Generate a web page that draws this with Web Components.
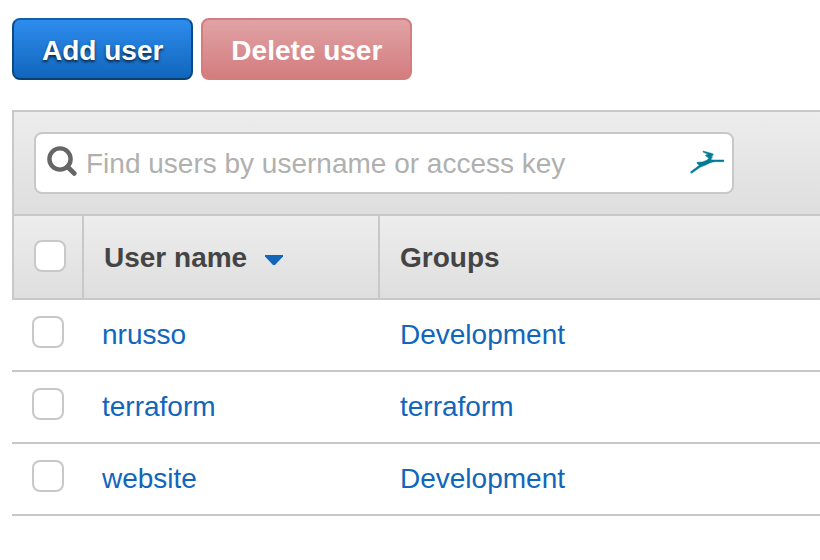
<!DOCTYPE html>
<html lang="en">
<head>
<meta charset="utf-8">
<meta name="viewport" content="width=device-width, initial-scale=1">
<title>Users</title>
<style>
  body {
    margin: 0;
    background: #fff;
    color: #444;
    font: 28px/32px "Liberation Sans", Arial, sans-serif;
    --line: #c8c8c8;
    --link: #1166bb;
    --bar: linear-gradient(#ededed, #dedede);
  }
</style>
</head>
<body>
<user-page>
  <action-button slot="actions">Add user</action-button>
  <action-button slot="actions" variant="danger" disabled>Delete user</action-button>
  <search-field slot="search" placeholder="Find users by username or access key"></search-field>
  <user-table></user-table>
</user-page>

<script>
class BaseElement extends HTMLElement {
  connectedCallback() {
    if (this.shadowRoot) return;
    this.attachShadow({ mode: "open" }).innerHTML = this.render();
  }
}

class UserPage extends BaseElement {
  render() {
    return `
      <style>
        :host { display: block; padding: 18px 0 18px 12px; }
        .actions { display: flex; gap: 8px; margin-bottom: 30px; }
        .filter {
          padding: 20px;
          background: var(--bar);
          border: 2px solid var(--line);
          border-right: 0;
        }
      </style>
      <div class="actions"><slot name="actions"></slot></div>
      <main>
        <div class="filter"><slot name="search"></slot></div>
        <slot></slot>
      </main>`;
  }
}

class ActionButton extends BaseElement {
  render() {
    return `
      <style>
        :host { display: block; }
        button {
          display: block;
          padding: 15px 28px 11px;
          font: bold 28px/32px "Liberation Sans", Arial, sans-serif;
          color: #fff;
          border: 2px solid;
          border-color: #1160b0 #0c4a85 #0a3f74;
          border-radius: 8px;
          background: linear-gradient(#2e8cee, #1166bb);
          text-shadow: 0 2px 3px rgba(0, 0, 0, .7);
          cursor: pointer;
        }
        :host([variant="danger"]) button {
          border-color: #d47c7e;
          background: linear-gradient(#e0a3a5, #d47c7e);
          text-shadow: none;
          cursor: default;
        }
      </style>
      <button type="button" ${this.hasAttribute("disabled") ? "disabled" : ""}><slot></slot></button>`;
  }
}

class SearchField extends BaseElement {
  render() {
    const text = this.getAttribute("placeholder");
    return `
      <style>
        :host {
          display: flex;
          align-items: center;
          box-sizing: border-box;
          max-width: 700px;
          padding: 12px 8px 12px 11px;
          gap: 9px;
          background: #fff;
          border: 2px solid var(--line);
          border-radius: 8px;
        }
        svg { flex: none; display: block; }
        input {
          flex: 1;
          min-width: 0;
          height: 32px;
          padding: 2px 0 0;
          border: 0;
          outline: 0;
          background: none;
          font: inherit;
          color: #444;
        }
        input::placeholder { color: #b0b0b0; opacity: 1; }
      </style>
      <svg width="30" height="34" viewBox="0 0 30 34" fill="none" stroke="#666" aria-hidden="true">
        <circle cx="13" cy="13" r="10.6" stroke-width="4.4"/>
        <path d="M20.5 20.7 27.2 27.4" stroke-width="4.8" stroke-linecap="round"/>
      </svg>
      <input type="text" placeholder="${text}" aria-label="${text}">
      <svg width="34" height="26" viewBox="120 150 102 78" fill="#007b94" stroke="#007b94" stroke-width="1.5" aria-hidden="true">
        <path d="M159 153 188 161 190 165 184 168 188 171 184 174 183 179 190 180H222V185H194C182 186 176 190 167 195L150 202 125 220 121 216 148 196 141 190V187L157 186 170 181 176 176 173 171 167 168V165L175 163 160 157Z"/>
      </svg>`;
  }
}

class TickBox extends BaseElement {
  render() {
    return `
      <style>
        :host { display: block; }
        input {
          appearance: none;
          display: block;
          width: 32px;
          height: 32px;
          margin: 0;
          background: #fff;
          border: 2px solid var(--line);
          border-radius: 8px;
        }
        input:checked { background: var(--link); }
      </style>
      <input type="checkbox" aria-label="${this.getAttribute("label")}">`;
  }
}

class UserTable extends BaseElement {
  render() {
    const users = [
      ["nrusso", "Development"],
      ["terraform", "terraform"],
      ["website", "Development"],
    ];
    const rows = users.map(([name, group]) => `
      <tr>
        <td><tick-box label="Select ${name}"></tick-box></td>
        <td><a href="#${name}">${name}</a></td>
        <td><a href="#group-${group}">${group}</a></td>
      </tr>`).join("");
    return `
      <style>
        :host { display: block; }
        table { width: 100%; border-spacing: 0; table-layout: fixed; }
        .pick { width: 72px; }
        .name { width: 296px; }
        th, td {
          box-sizing: border-box;
          text-align: left;
          border-bottom: 2px solid var(--line);
        }
        thead tr { background: var(--bar); }
        th { height: 84px; padding: 2px 20px 0; border-right: 2px solid var(--line); }
        th:first-child { border-left: 2px solid var(--line); padding: 0 0 2px 20px; }
        th:last-child { border-right: 0; }
        td { height: 72px; padding: 0 18px; }
        td:first-child { padding: 0 0 6px 20px; }
        td:last-child { padding-left: 20px; }
        button {
          display: flex;
          align-items: center;
          gap: 17px;
          padding: 0;
          border: 0;
          background: none;
          font: inherit;
          color: inherit;
        }
        svg { display: block; margin-top: 4px; }
        a { color: var(--link); text-decoration: none; }
      </style>
      <table>
        <colgroup><col class="pick"><col class="name"><col></colgroup>
        <thead>
          <tr>
            <th scope="col"><tick-box label="Select all users"></tick-box></th>
            <th scope="col" aria-sort="descending">
              <button type="button">User name
                <svg width="20" height="12" viewBox="0 0 20 12" aria-hidden="true">
                  <path d="M1 1H19V2.5L11 11H9L1 2.5Z" fill="#1166bb"/>
                </svg>
              </button>
            </th>
            <th scope="col">Groups</th>
          </tr>
        </thead>
        <tbody>${rows}</tbody>
      </table>`;
  }
}

customElements.define("tick-box", TickBox);
customElements.define("action-button", ActionButton);
customElements.define("search-field", SearchField);
customElements.define("user-table", UserTable);
customElements.define("user-page", UserPage);
</script>
</body>
</html>
